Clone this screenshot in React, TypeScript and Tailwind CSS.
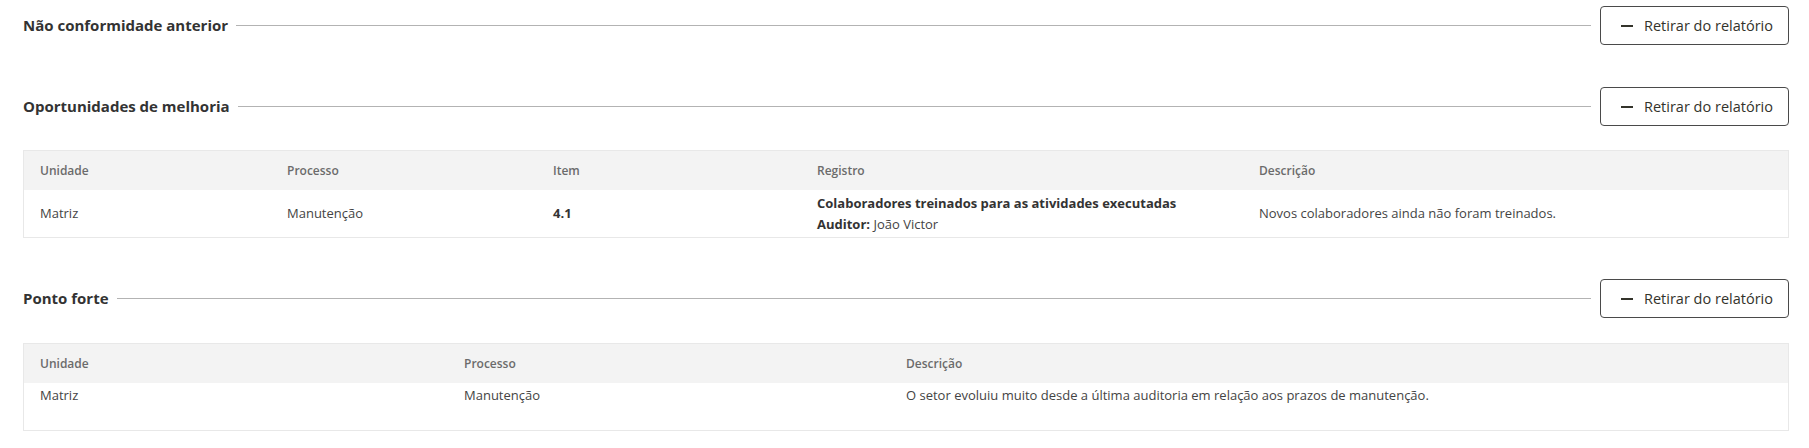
import React from 'react';

function MinusIcon() {
    return (
        <svg width="12" height="12" viewBox="0 0 12 12" className="shrink-0">
            <rect x="0" y="5" width="12" height="2" fill="#33332b" />
        </svg>
    );
}

function SectionHeader({ title }: { title: string }) {
    return (
        <div className="flex items-center h-[39px]">
            <h2 className="text-[15px] font-bold text-[#333] whitespace-nowrap">{title}</h2>
            <div className="flex-1 h-px bg-[#b3b3b3] ml-[8px] mr-[9px]" />
            <button className="flex items-center gap-[11px] h-[39px] w-[189px] pl-[20px] border border-[#4a4a4a] rounded-[4px] bg-white text-[14.5px] text-[#33332b]">
                <MinusIcon />
                <span>Retirar do relatório</span>
            </button>
        </div>
    );
}

export default function App() {
    return (
        <div className="w-full h-[448px] bg-white pl-[23px] pr-[20px] font-['Open_Sans',sans-serif]">
            <div className="pt-[6px]">
                <SectionHeader title="Não conformidade anterior" />
            </div>

            <div className="mt-[42px]">
                <SectionHeader title="Oportunidades de melhoria" />
            </div>

            <div className="mt-[24px] border border-[#e8e8e8]">
                <div className="grid grid-cols-[247px_266px_264px_442px_1fr] h-[39px] items-center bg-[#f3f3f3] text-[12px] font-semibold text-[#6b6b6b]">
                    <div className="pl-[16px]">Unidade</div>
                    <div className="pl-[16px]">Processo</div>
                    <div className="pl-[16px]">Item</div>
                    <div className="pl-[16px]">Registro</div>
                    <div className="pl-[16px]">Descrição</div>
                </div>
                <div className="grid grid-cols-[247px_266px_264px_442px_1fr] h-[47px] items-center text-[13px] text-[#444]">
                    <div className="pl-[16px]">Matriz</div>
                    <div className="pl-[16px]">Manutenção</div>
                    <div className="pl-[16px] font-bold text-[#333]">4.1</div>
                    <div className="pl-[16px] leading-[21px]">
                        <div className="font-bold text-[#333]">Colaboradores treinados para as atividades executadas</div>
                        <div><span className="font-bold text-[#333]">Auditor:</span> João Victor</div>
                    </div>
                    <div className="pl-[16px]">Novos colaboradores ainda não foram treinados.</div>
                </div>
            </div>

            <div className="mt-[41px]">
                <SectionHeader title="Ponto forte" />
            </div>

            <div className="mt-[25px] border border-[#e8e8e8]">
                <div className="grid grid-cols-[424px_442px_1fr] h-[39px] items-center bg-[#f3f3f3] text-[12px] font-semibold text-[#6b6b6b]">
                    <div className="pl-[16px]">Unidade</div>
                    <div className="pl-[16px]">Processo</div>
                    <div className="pl-[16px]">Descrição</div>
                </div>
                <div className="grid grid-cols-[424px_442px_1fr] h-[47px] pt-[2px] text-[13px] leading-[20px] text-[#444]">
                    <div className="pl-[16px]">Matriz</div>
                    <div className="pl-[16px]">Manutenção</div>
                    <div className="pl-[16px]">O setor evoluiu muito desde a última auditoria em relação aos prazos de manutenção.</div>
                </div>
            </div>
        </div>
    );
}
